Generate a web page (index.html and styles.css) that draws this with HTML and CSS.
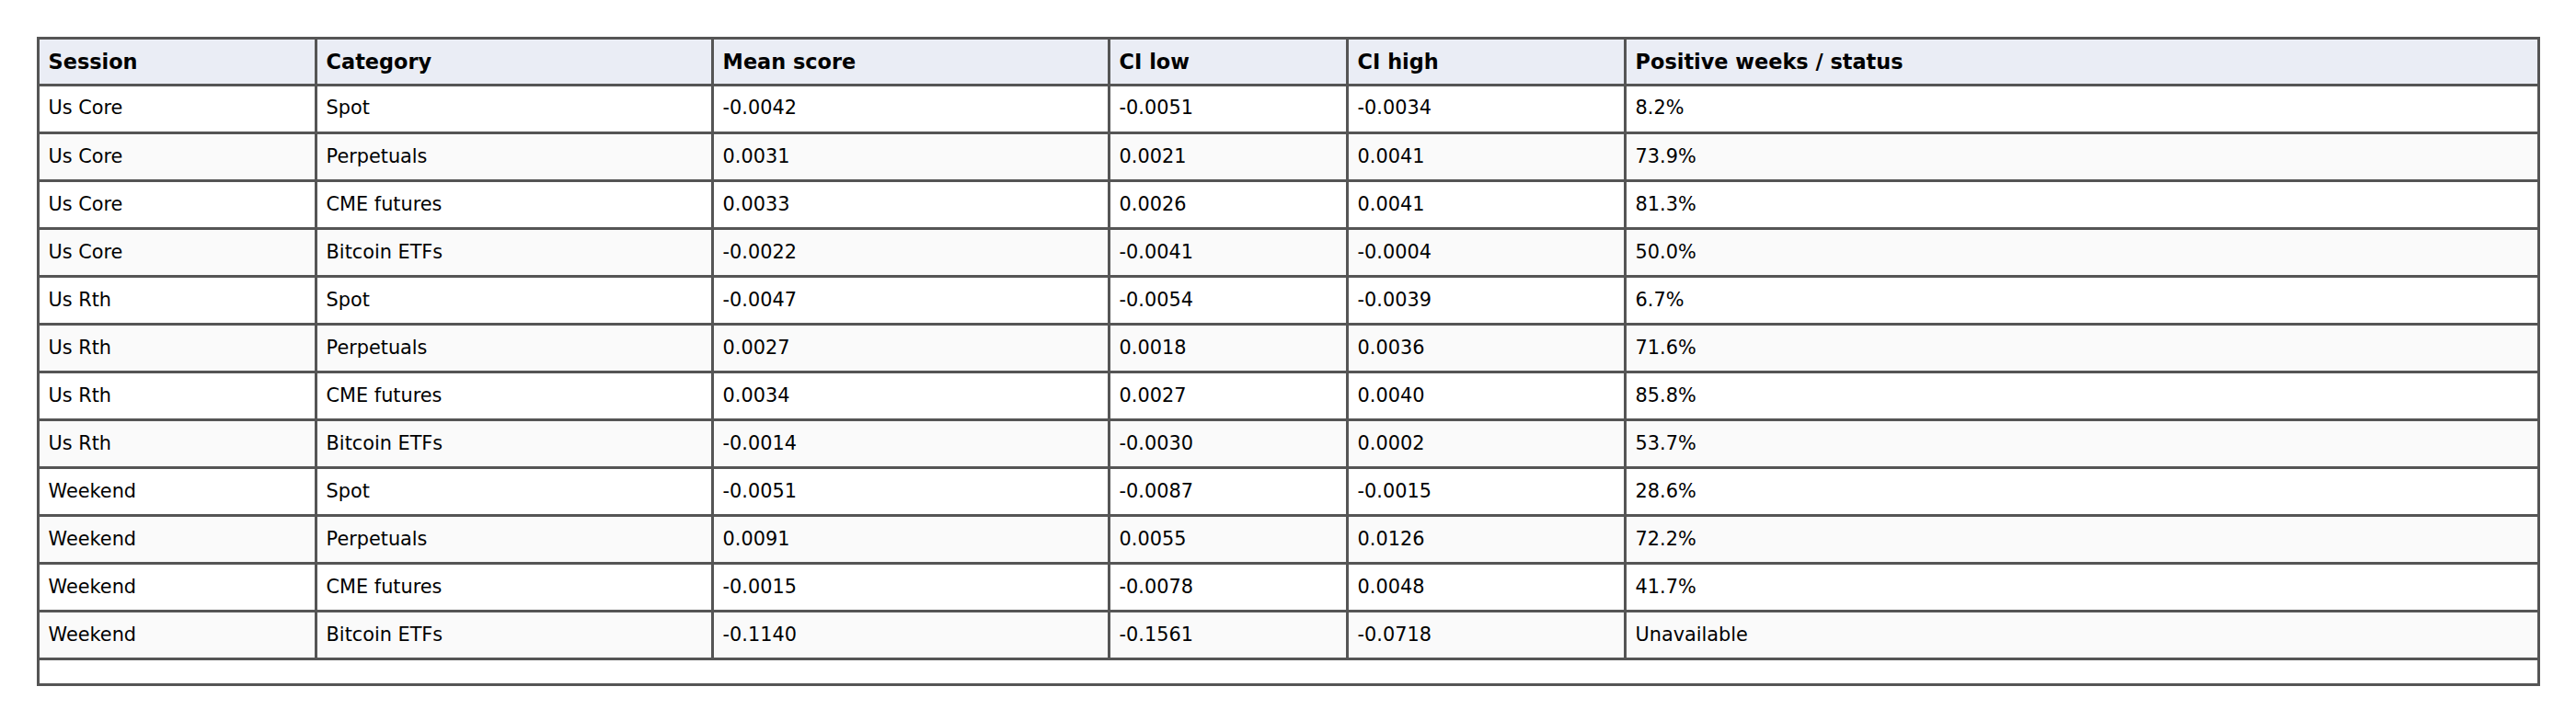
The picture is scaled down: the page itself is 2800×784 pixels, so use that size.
FILE: index.html
```html
<!DOCTYPE html>
<html lang="en">
<head>
<meta charset="utf-8">
<title>Session scores</title>
<link rel="stylesheet" href="styles.css">
</head>
<body>
<table class="grid">
  <colgroup>
    <col class="c-session">
    <col class="c-cat">
    <col class="c-mean">
    <col class="c-low">
    <col class="c-high">
    <col class="c-pos">
  </colgroup>
  <thead>
    <tr>
      <th>Session</th><th>Category</th><th>Mean score</th><th>CI low</th><th>CI high</th><th>Positive weeks / status</th>
    </tr>
  </thead>
  <tbody>
    <tr><td>Us Core</td><td>Spot</td><td>-0.0042</td><td>-0.0051</td><td>-0.0034</td><td>8.2%</td></tr>
    <tr><td>Us Core</td><td>Perpetuals</td><td>0.0031</td><td>0.0021</td><td>0.0041</td><td>73.9%</td></tr>
    <tr><td>Us Core</td><td>CME futures</td><td>0.0033</td><td>0.0026</td><td>0.0041</td><td>81.3%</td></tr>
    <tr><td>Us Core</td><td>Bitcoin ETFs</td><td>-0.0022</td><td>-0.0041</td><td>-0.0004</td><td>50.0%</td></tr>
    <tr><td>Us Rth</td><td>Spot</td><td>-0.0047</td><td>-0.0054</td><td>-0.0039</td><td>6.7%</td></tr>
    <tr><td>Us Rth</td><td>Perpetuals</td><td>0.0027</td><td>0.0018</td><td>0.0036</td><td>71.6%</td></tr>
    <tr><td>Us Rth</td><td>CME futures</td><td>0.0034</td><td>0.0027</td><td>0.0040</td><td>85.8%</td></tr>
    <tr><td>Us Rth</td><td>Bitcoin ETFs</td><td>-0.0014</td><td>-0.0030</td><td>0.0002</td><td>53.7%</td></tr>
    <tr><td>Weekend</td><td>Spot</td><td>-0.0051</td><td>-0.0087</td><td>-0.0015</td><td>28.6%</td></tr>
    <tr><td>Weekend</td><td>Perpetuals</td><td>0.0091</td><td>0.0055</td><td>0.0126</td><td>72.2%</td></tr>
    <tr><td>Weekend</td><td>CME futures</td><td>-0.0015</td><td>-0.0078</td><td>0.0048</td><td>41.7%</td></tr>
    <tr><td>Weekend</td><td>Bitcoin ETFs</td><td>-0.1140</td><td>-0.1561</td><td>-0.0718</td><td>Unavailable</td></tr>
  </tbody>
  <tfoot>
    <tr><td class="foot" colspan="6"></td></tr>
  </tfoot>
</table>
</body>
</html>
```

FILE: styles.css
```css
html, body {
  margin: 0;
  padding: 0;
  background: #ffffff;
}

body {
  padding: 40px;
  font-family: "DejaVu Sans", "Liberation Sans", sans-serif;
  color: #000000;
}

.grid {
  width: 2720px;
  border-collapse: collapse;
  table-layout: fixed;
  font-size: 20.8px;
}

.c-session { width: 302px; }
.c-cat { width: 431px; }
.c-mean { width: 431px; }
.c-low { width: 259px; }
.c-high { width: 302px; }
.c-pos { width: 993px; }

.grid th,
.grid td {
  border: 3px solid #555555;
  padding: 12.8px 9.6px;
  text-align: left;
  vertical-align: middle;
  white-space: nowrap;
}

.grid th {
  background: #eaedf5;
  font-weight: bold;
  font-size: 22.4px;
  line-height: 22.1px;
}

.grid td {
  line-height: 23.45px;
}

.grid tbody tr:nth-child(even) td {
  background: #fafafa;
}

.grid td.foot {
  padding: 12.5px 9.6px;
  line-height: 0;
  height: 0;
  background: #ffffff;
}
```
